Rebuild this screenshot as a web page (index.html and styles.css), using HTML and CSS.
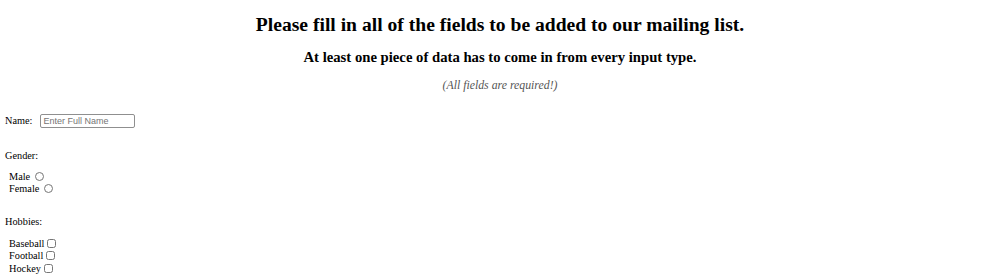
FILE: index.html
```html
<!DOCTYPE html>
<html>
<head>
<meta charset="utf-8">
<link rel="stylesheet" href="styles.css">
</head>
<body>
<div class="page">
  <h1 class="title">Please fill in all of the fields to be added to our mailing list.</h1>
  <h2 class="subtitle">At least one piece of data has to come in from every input type.</h2>
  <p class="note">(All fields are required!)</p>
  <form class="form">
    <div class="name-row">
      <label class="label" for="fullname">Name:</label>
      <input class="text-input" id="fullname" type="text" placeholder="Enter Full Name">
    </div>
    <div class="group-label gender-label">Gender:</div>
    <div class="options gender-options">
      <div class="option"><span>Male</span><input class="radio" type="radio" name="gender"></div>
      <div class="option"><span>Female</span><input class="radio" type="radio" name="gender"></div>
    </div>
    <div class="group-label hobbies-label">Hobbies:</div>
    <div class="options hobby-options">
      <div class="option"><span>Baseball</span><input class="check" type="checkbox"></div>
      <div class="option"><span>Football</span><input class="check" type="checkbox"></div>
      <div class="option"><span>Hockey</span><input class="check" type="checkbox"></div>
    </div>
  </form>
</div>
</body>
</html>
```
FILE: styles.css
```css
html, body {
  margin: 0;
  padding: 0;
  background: #fff;
}
.page {
  padding: 0 5px;
  font-family: "Liberation Serif", "Times New Roman", serif;
  color: #000;
  font-size: 10.3px;
}
.title {
  font-size: 19.6px;
  line-height: 25px;
  margin: 12px 0 0;
  text-align: center;
  font-weight: bold;
}
.subtitle {
  font-size: 14.7px;
  line-height: 18px;
  margin: 11px 0 0;
  text-align: center;
  font-weight: bold;
}
.note {
  font-size: 11.8px;
  line-height: 14px;
  margin: 12px 0 0;
  text-align: center;
  font-style: italic;
  color: #555;
}
.form {
  margin: 0;
}
.name-row {
  display: flex;
  align-items: center;
  gap: 8px;
  margin-top: 22px;
  height: 14px;
}
.label {
  line-height: 12px;
}
.text-input {
  width: 95px;
  height: 14px;
  box-sizing: border-box;
  margin: 0;
  padding: 1px 2px;
  border: 1px solid #8f8f8f;
  border-radius: 2px;
  font-family: "Liberation Sans", Arial, sans-serif;
  font-size: 9px;
}
.text-input::placeholder {
  color: #757575;
}
.group-label {
  line-height: 12px;
}
.gender-label {
  margin-top: 22px;
}
.hobbies-label {
  margin-top: 21px;
}
.options {
  padding-left: 4px;
}
.gender-options {
  margin-top: 8px;
}
.hobby-options {
  margin-top: 9px;
}
.option {
  display: flex;
  align-items: center;
  gap: 3px;
  height: 12.5px;
}
.radio, .check {
  width: 9px;
  height: 9px;
  margin: 0;
}
.radio {
  margin-left: 2px;
}
```
